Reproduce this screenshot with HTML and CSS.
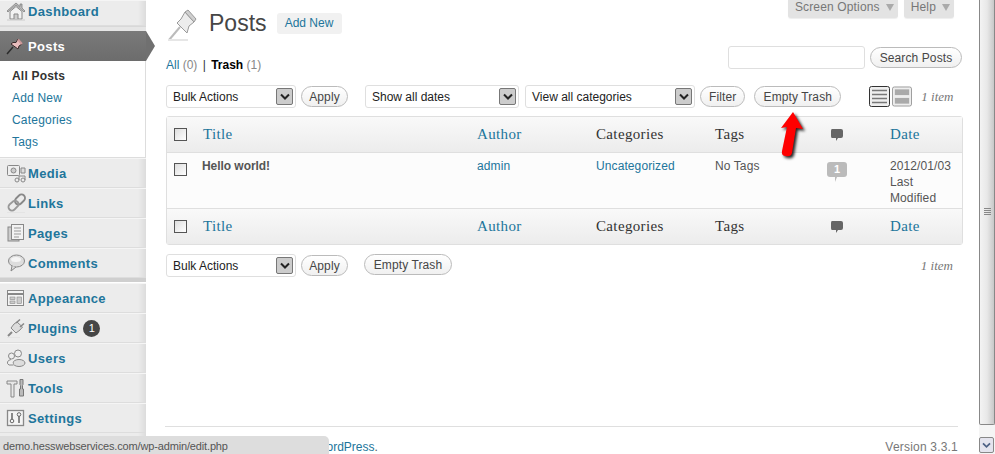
FILE: index.html
```html
<!DOCTYPE html>
<html lang="en">
<head>
<meta charset="utf-8">
<title>Posts</title>
<link rel="stylesheet" href="styles.css">
</head>
<body>
<div class="app">
  <nav class="sidebar">
    <a class="item first"><svg class="ico" viewBox="0 0 20 20"><path d="M1 10 10 2l4 3.500V3h2v4l3 3-1 1-8-7-8 7z" fill="#bbb" stroke="#777" stroke-width=".7"/><path d="M4 10.500 10 5.500l6 5V18H4z" fill="#f2f2f2" stroke="#888"/><path d="M8 18v-5h4v5" fill="#ccc" stroke="#888"/><path d="M1 19h18" stroke="#ccc"/></svg>Dashboard</a>
    <div class="sep"></div>
    <a class="item active"><svg class="ico" viewBox="0 0 20 20"><path d="M1 18 7 11" stroke="#2b2b2b" stroke-width="1.500"/><path d="M5 8 12 13 13 10 16 8 12 3 10 6.500 7 6.500z" fill="#e8bcbc" stroke="#3a2a2a"/><path d="M12 3.500 16 8" stroke="#c99" stroke-width="2"/></svg>Posts</a>
    <div class="sub">
      <a class="cur">All Posts</a><a>Add New</a><a>Categories</a><a>Tags</a>
    </div>
    <a class="item"><svg class="ico" viewBox="0 0 20 20"><rect x="1.500" y="2.500" width="12" height="10" rx="1" fill="#eee" stroke="#888"/><circle cx="7.500" cy="7.500" r="2.500" fill="#ccc" stroke="#888"/><path d="M15 5h4v5h-4z" fill="#ddd" stroke="#888"/><circle cx="11" cy="17" r="2" fill="none" stroke="#888"/><circle cx="17" cy="17" r="2" fill="none" stroke="#888"/><path d="M13 17v-4h6v4" fill="none" stroke="#888"/></svg>Media</a>
    <a class="item"><svg class="ico" viewBox="0 0 20 20"><path d="M13 2.500a3.500 3.500 0 0 1 5 5l-3 3a3.500 3.500 0 0 1-5-5z" fill="none" stroke="#888" stroke-width="1.800"/><path d="M7.500 8a3.500 3.500 0 0 1 4.500 5l-3.500 3.500a3.500 3.500 0 0 1-5-5z" fill="none" stroke="#999" stroke-width="1.800"/><path d="M1 20h18" stroke="#ddd"/></svg>Links</a>
    <a class="item"><svg class="ico" viewBox="0 0 20 20"><rect x="2" y="4" width="11" height="14" fill="#ccc" stroke="#888"/><rect x="5.500" y="1.500" width="12" height="15" fill="#f2f2f2" stroke="#888"/><path d="M8 5h7M8 8h7M8 11h7M8 14h5" stroke="#999"/></svg>Pages</a>
    <a class="item"><svg class="ico" viewBox="0 0 20 20"><ellipse cx="10.500" cy="8" rx="8" ry="6" fill="#ddd" stroke="#888"/><path d="M6 13 5 18l5-4" fill="#ddd" stroke="#888"/><ellipse cx="10" cy="6.500" rx="5" ry="2.500" fill="#f5f5f5"/></svg>Comments</a>
    <div class="sep dark"></div>
    <a class="item"><svg class="ico" viewBox="0 0 20 20"><rect x="1.500" y="2.500" width="16" height="15" fill="#f4f4f4" stroke="#888"/><path d="M2 6h15" stroke="#888" stroke-width="2"/><rect x="4" y="9" width="5" height="2.500" fill="#ccc" stroke="#888" stroke-width=".6"/><rect x="4" y="13" width="5" height="2.500" fill="#ccc" stroke="#888" stroke-width=".6"/><rect x="11" y="9" width="4.500" height="6.500" fill="#ccc" stroke="#888" stroke-width=".6"/></svg>Appearance</a>
    <a class="item"><svg class="ico" viewBox="0 0 20 20"><path d="M2 18 6 14" stroke="#888" stroke-width="2"/><path d="M5 10 10 15 14 12 16.500 9 11 4 8 6z" fill="#ddd" stroke="#888"/><path d="M10 5 14 1.500M14 9 18 5.500" stroke="#888" stroke-width="1.600"/><path d="M1 20h13" stroke="#ddd"/></svg>Plugins<span class="badge">1</span></a>
    <a class="item"><svg class="ico" viewBox="0 0 20 20"><circle cx="5.500" cy="8" r="3" fill="#eee" stroke="#888"/><circle cx="12" cy="5.500" r="3.500" fill="#eee" stroke="#888"/><ellipse cx="13" cy="15" rx="6" ry="3.500" fill="#ddd" stroke="#888"/><path d="M7.500 17H3q-2-1-1.500-3T5 11.500" fill="#eee" stroke="#888"/></svg>Users</a>
    <a class="item"><svg class="ico" viewBox="0 0 20 20"><path d="M1 3h10v3H8v13H5V6H1z" fill="#e8e8e8" stroke="#888"/><path d="M14 1.500h3v5l-.5 1V11h1v7h-4v-7h1V7.500l-.5-1z" fill="#bbb" stroke="#777"/></svg>Tools</a>
    <a class="item"><svg class="ico" viewBox="0 0 20 20"><rect x="1.500" y="2.500" width="16" height="15" fill="#f4f4f4" stroke="#888" stroke-width="1.300"/><path d="M6 5v6M13 8v7" stroke="#666" stroke-width="1.500"/><circle cx="6" cy="13" r="1.800" fill="none" stroke="#666"/><circle cx="13" cy="6.500" r="1.800" fill="none" stroke="#666"/></svg>Settings</a>
  </nav>

  <main class="main">
    <div class="top">
      <div class="title-row">
        <svg class="pin" viewBox="0 0 30 32"><path d="M1 31 12 18" stroke="#bbb" stroke-width="2"/><path d="M9 14 19 24 21 17 26 13 17 3 13 10z" fill="#ececec" stroke="#999"/><path d="M17 3 26 13 28 10 20 1z" fill="#cfcfcf" stroke="#999"/><path d="M0 31h20" stroke="#e6e6e6" stroke-width="2"/></svg>
        <h1>Posts</h1>
        <a class="add">Add New</a>
      </div>
      <div class="tabs">
        <span class="tab">Screen Options<i class="tri"></i></span>
        <span class="tab">Help<i class="tri"></i></span>
      </div>
    </div>

    <div class="filter-row">
      <div class="views"><a>All</a> <span class="cnt">(0)</span> <span class="bar">|</span> <b>Trash</b> <span class="cnt">(1)</span></div>
      <div class="search"><span class="input"></span><button class="btn">Search Posts</button></div>
    </div>

    <div class="toolbar">
      <span class="select w130">Bulk Actions<i class="drop"><svg viewBox="0 0 10 8"><path d="M1 1.500 5 5.500 9 1.500" fill="none" stroke="#222" stroke-width="2"/></svg></i></span>
      <button class="btn">Apply</button>
      <span class="select w154 gap">Show all dates<i class="drop"><svg viewBox="0 0 10 8"><path d="M1 1.500 5 5.500 9 1.500" fill="none" stroke="#222" stroke-width="2"/></svg></i></span>
      <span class="select w170">View all categories<i class="drop"><svg viewBox="0 0 10 8"><path d="M1 1.500 5 5.500 9 1.500" fill="none" stroke="#222" stroke-width="2"/></svg></i></span>
      <button class="btn">Filter</button>
      <button class="btn trash">Empty Trash</button>
      <span class="modes">
        <svg class="mode" viewBox="0 0 21 21"><rect x=".5" y=".5" width="20" height="20" rx="2" fill="#eee" stroke="#333"/><path d="M3 4.500h15M3 8.500h15M3 12.500h15M3 16.500h15" stroke="#777" stroke-width="1.500"/></svg>
        <svg class="mode" viewBox="0 0 21 21"><rect x=".5" y=".5" width="20" height="20" rx="2" fill="#eee" stroke="#999"/><rect x="3" y="3" width="15" height="6" fill="#aaa"/><rect x="3" y="12" width="15" height="6" fill="#aaa"/></svg>
      </span>
      <em class="count">1 item</em>
    </div>

    <table class="list">
      <colgroup><col class="c0"><col class="c1"><col class="c2"><col class="c3"><col class="c4"><col class="c5"><col class="c6"></colgroup>
      <thead>
        <tr><th><i class="check"></i></th><th><a>Title</a></th><th><a>Author</a></th><th>Categories</th><th>Tags</th><th><svg class="bubble" viewBox="0 0 14 14"><path d="M2 1h9q2 0 2 2v5q0 2-2 2H8l-2 3v-3H2Q1 10 1 8V3q0-2 1-2z" fill="#666"/></svg></th><th><a>Date</a></th></tr>
      </thead>
      <tbody>
        <tr>
          <td><i class="check"></i></td>
          <td><b class="post">Hello world!</b></td>
          <td><a>admin</a></td>
          <td><a>Uncategorized</a></td>
          <td>No Tags</td>
          <td><span class="num">1</span></td>
          <td>2012/01/03<br>Last<br>Modified</td>
        </tr>
      </tbody>
      <tfoot>
        <tr><th><i class="check"></i></th><th><a>Title</a></th><th><a>Author</a></th><th>Categories</th><th>Tags</th><th><svg class="bubble" viewBox="0 0 14 14"><path d="M2 1h9q2 0 2 2v5q0 2-2 2H8l-2 3v-3H2Q1 10 1 8V3q0-2 1-2z" fill="#666"/></svg></th><th><a>Date</a></th></tr>
      </tfoot>
    </table>

    <div class="toolbar lower">
      <span class="select w130">Bulk Actions<i class="drop"><svg viewBox="0 0 10 8"><path d="M1 1.500 5 5.500 9 1.500" fill="none" stroke="#222" stroke-width="2"/></svg></i></span>
      <button class="btn">Apply</button>
      <button class="btn trash2">Empty Trash</button>
      <em class="count push">1 item</em>
    </div>

    <footer class="foot">
      <span>Thank you for creating with <a>WordPress</a>.</span>
      <span class="ver">Version 3.3.1</span>
    </footer>
  </main>

  <aside class="scroll">
    <div class="thumb"><i class="grip"></i></div>
    <div class="down"><svg viewBox="0 0 10 8"><path d="M1 1.500 5 5.500 9 1.500" fill="none" stroke="#4d6185" stroke-width="2"/></svg></div>
  </aside>
</div>

<svg class="arrow" viewBox="775 105 35 60"><path d="M793 112 803 129 796 128 792 153Q791 157 786 156 781 156 782 151L787 127 781 128Z" fill="#f00"/></svg>
<div class="status">demo.hesswebservices.com/wp-admin/edit.php</div>
</body>
</html>
```
FILE: styles.css
```css
* { box-sizing: border-box; }
html, body { margin: 0; height: 454px; overflow: hidden; }
body { background: #fff; font: 12px "Liberation Sans", Arial, sans-serif; color: #333; position: relative; }
a { color: #21759b; }
.app { display: flex; height: 454px; }

/* sidebar */
.sidebar { width: 146px; flex: none; height: 454px; background: linear-gradient(90deg, #ececec 0, #ececec 138px, #dcdcdc 146px); }
.item { display: flex; align-items: center; height: 30px; padding-left: 6px; font-weight: bold; font-size: 13px; letter-spacing: .35px; color: #21759b; border-top: 1px solid #f5f5f5; border-bottom: 1px solid #ddd; }
.item.first { height: 26px; padding-bottom: 4px; }
.ico { width: 20px; height: 20px; margin-right: 2px; flex: none; }
.sep { height: 5px; border-top: 1px solid #d8d8d8; background: #e6e6e6; }
.sep.dark { background: linear-gradient(#cfcfcf 0, #cfcfcf 4px, #fff 4px); border-top: 0; }
.active { position: relative; color: #fff; background: linear-gradient(#7a7a7a, #6c6c6c); border: 0; }
.active::after { content: ""; position: absolute; left: 146px; top: 0; width: 9px; height: 30px; background: #707070; clip-path: polygon(0 0, 100% 50%, 0 100%); }
.sub { height: 97px; background: #fff; border-bottom: 1px solid #ddd; padding: 4px 0 0 12px; margin-right: 1px; }
.sub a { display: block; height: 22px; line-height: 22px; letter-spacing: .2px; }
.sub .cur { font-weight: bold; color: #333; }
.badge { width: 17px; height: 17px; margin-left: 6px; border-radius: 50%; background: #464646; color: #fff; font-size: 11px; line-height: 17px; text-align: center; font-weight: normal; letter-spacing: 0; }

/* main */
.main { flex: 1; min-width: 0; height: 454px; display: flex; flex-direction: column; padding: 0 16px 0 20px; }
.top { display: flex; justify-content: space-between; align-items: flex-start; height: 46px; }
.title-row { display: flex; align-items: flex-start; padding-top: 8px; }
.pin { width: 30px; height: 32px; margin: 1px 0 0 2px; }
h1 { margin: 0 0 0 11px; font-weight: normal; font-size: 23px; line-height: 30px; color: #464646; }
.add { margin: 5px 0 0 10px; width: 65px; height: 21px; line-height: 21px; text-align: center; background: #f1f1f1; border-radius: 3px; }
.tabs { display: flex; gap: 6px; margin-right: 9px; }
.tab { height: 18px; padding: 0 4px 0 7px; line-height: 14px; background: #e3e3e3; color: #777; border-radius: 0 0 3px 3px; box-shadow: 0 1px 1px #eee; white-space: nowrap; letter-spacing: .15px; }
.tri { display: inline-block; margin-left: 6px; border: 4px solid transparent; border-top: 7px solid #aaa; border-bottom: 0; }

.filter-row { display: flex; justify-content: space-between; align-items: flex-start; height: 39px; }
.views { padding-top: 11px; line-height: 15px; margin-top: 1px; }
.views b { color: #000; }
.cnt { color: #888; }
.bar { margin: 0 2px; }
.search { display: flex; gap: 5px; align-items: center; margin-right: 1px; }
.input { width: 137px; height: 23px; border: 1px solid #dfdfdf; border-radius: 3px; background: #fff; }
.search .btn { width: 92px; padding: 0; }
.btn { flex: none; height: 21px; padding: 0 8px; border: 1px solid #bbb; border-radius: 11px; background: linear-gradient(#fff, #f0f0f0); color: #464646; font: 12px "Liberation Sans", Arial, sans-serif; letter-spacing: .1px; white-space: nowrap; }

.toolbar { display: flex; align-items: center; height: 23px; gap: 5px; }
.select { position: relative; display: block; flex: none; height: 23px; line-height: 22px; padding-left: 6px; border: 1px solid #dfdfdf; border-radius: 3px; color: #222; background: #fff; }
.w130 { width: 130px; }
.w154 { width: 154px; margin-right: 1px; }
.w170 { width: 170px; }
.gap { margin-left: 12px; }
.drop { position: absolute; right: 2px; top: 2px; width: 17px; height: 17px; display: flex; align-items: center; justify-content: center; border: 1px solid #777; border-radius: 2px; background: #ccc; }
.drop svg { width: 10px; height: 8px; }
.toolbar .btn:nth-child(2) { width: 47px; padding: 0; }
.trash { margin-left: 4px; width: 87px; padding: 0; }
.trash2 { margin: -2px 0 0 11px; width: 88px; padding: 0; }
.modes { display: flex; flex: none; gap: 2px; margin-left: 23px; }
.mode { width: 21px; height: 21px; }
.mode + .mode { width: 20px; }
.count { margin-left: auto; margin-right: 10px; font: italic 13px "Liberation Serif", serif; color: #777; white-space: nowrap; }
.modes + .count { margin-left: 4px; }

.list { width: 797px; margin-top: 8px; border-collapse: separate; border-spacing: 0; table-layout: fixed; border: 1px solid #dfdfdf; border-radius: 3px; }
.c0 { width: 36px; } .c1 { width: 274px; } .c2 { width: 119px; } .c3 { width: 119px; } .c4 { width: 115px; } .c5 { width: 60px; } .c6 { width: 72px; }
th { height: 36px; text-align: left; font: normal 15px "Liberation Serif", serif; color: #333; letter-spacing: .35px; background: linear-gradient(#f9f9f9, #ececec); padding: 0; }
thead th { border-bottom: 1px solid #dfdfdf; }
tfoot th { border-top: 1px solid #dfdfdf; }
th:first-child, td:first-child { padding-left: 7px; }
td { height: 55px; vertical-align: top; background: #fcfcfc; padding: 5px 0 0; line-height: 16px; color: #555; letter-spacing: .1px; }
td:first-child { padding-top: 10px; }
.post { color: #555; letter-spacing: -.05px; margin-left: -1px; display: inline-block; }
.check { display: block; width: 13px; height: 13px; border: 1px solid #555; background: linear-gradient(135deg, #ddd, #fff); }
.bubble { display: block; width: 14px; height: 14px; }
.num { display: block; position: relative; width: 20px; height: 15px; margin: 4px 0 0 -3px; border-radius: 3px; background: #bbb; color: #fff; font-weight: bold; font-size: 11px; line-height: 15px; text-align: center; }
.num::after { content: ""; position: absolute; left: 8px; top: 15px; border: 2px solid transparent; border-top: 5px solid #bbb; border-left-width: 0; border-bottom: 0; }

.lower { margin-top: 9px; }

.foot { margin-top: auto; margin-right: 5px; margin-left: -1px; padding-top: 13px; height: 28px; border-top: 1px solid #dfdfdf; display: flex; justify-content: space-between; line-height: 14px; color: #777; }
.foot span:first-child { padding-left: 3px; color: #555; }
.ver { letter-spacing: .2px; }

/* scrollbar */
.scroll { width: 16px; flex: none; margin-right: 0; height: 454px; display: flex; flex-direction: column; background: #f5f5f5; }
.thumb { height: 425px; flex: none; display: flex; align-items: center; justify-content: center; border: 1px solid #888; border-top: 0; border-radius: 0 0 2px 2px; background: linear-gradient(90deg, #f3f3f3 0, #e8e8e8 50%, #c8c8c8 100%); }
.grip { width: 7px; height: 8px; background: repeating-linear-gradient(#888 0, #888 1px, transparent 1px, transparent 2px); }
.down { width: 15px; height: 16px; margin: 12px 0 0; display: flex; align-items: center; justify-content: center; border: 1px solid #888; border-radius: 2px; background: #e4e4ee; }
.down svg { width: 9px; height: 7px; }

/* overlays */
.arrow { position: absolute; left: 775px; top: 105px; width: 35px; height: 60px; filter: drop-shadow(2px 2px 1.500px #222); }
.status { position: absolute; left: 0; bottom: 0; width: 329px; height: 18px; padding-left: 3px; font-size: 11px; letter-spacing: -.15px; line-height: 20px; background: #ddd; border-radius: 0 5px 0 0; color: #555; }
```
